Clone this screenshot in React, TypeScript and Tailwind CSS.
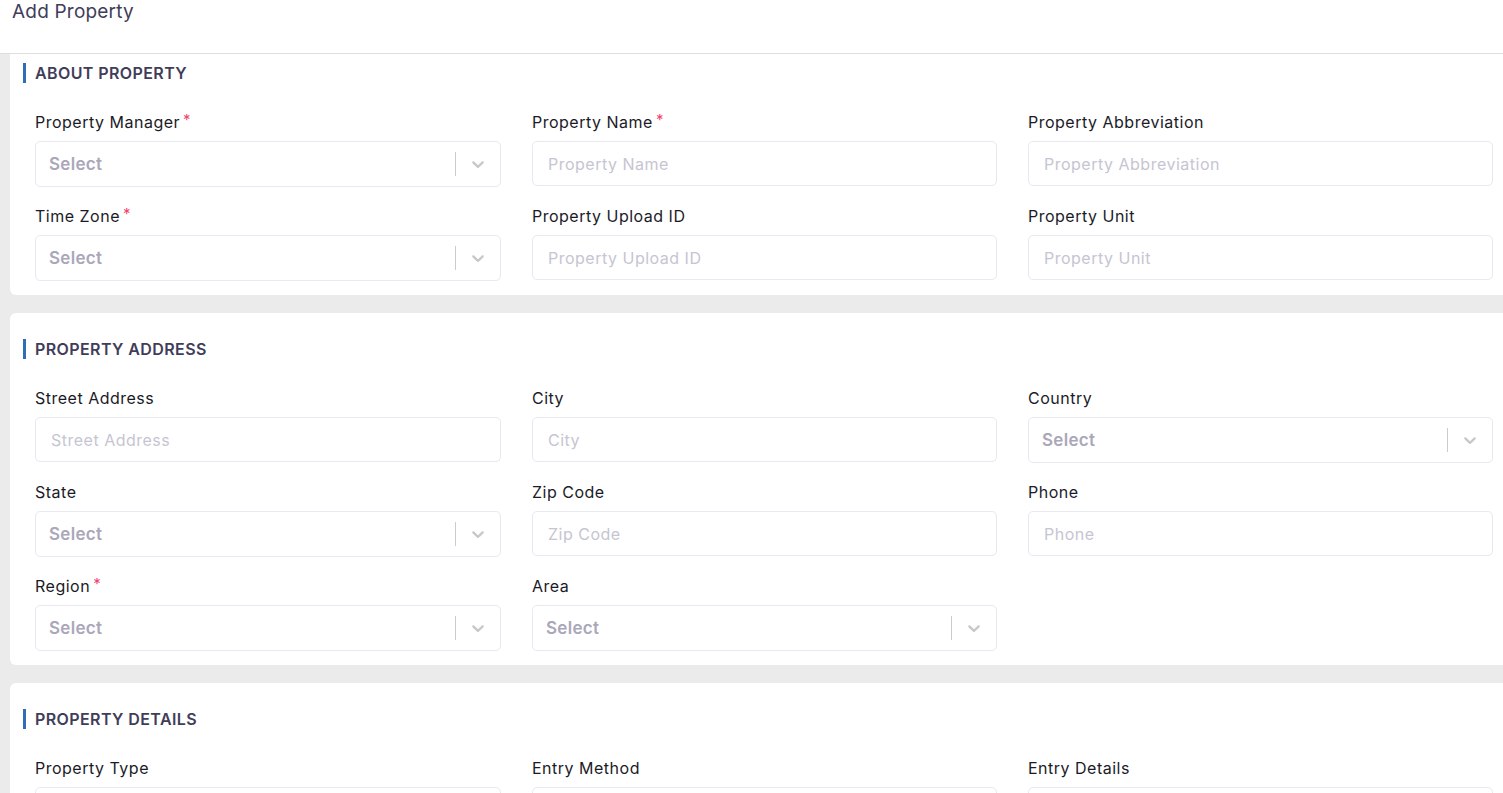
type Field = {
  label: string;
  kind: "select" | "input";
  required?: boolean;
};

type Section = {
  title: string;
  fields: Field[];
};

const sections: Section[] = [
  {
    title: "ABOUT PROPERTY",
    fields: [
      { label: "Property Manager", kind: "select", required: true },
      { label: "Property Name", kind: "input", required: true },
      { label: "Property Abbreviation", kind: "input" },
      { label: "Time Zone", kind: "select", required: true },
      { label: "Property Upload ID", kind: "input" },
      { label: "Property Unit", kind: "input" },
    ],
  },
  {
    title: "PROPERTY ADDRESS",
    fields: [
      { label: "Street Address", kind: "input" },
      { label: "City", kind: "input" },
      { label: "Country", kind: "select" },
      { label: "State", kind: "select" },
      { label: "Zip Code", kind: "input" },
      { label: "Phone", kind: "input" },
      { label: "Region", kind: "select", required: true },
      { label: "Area", kind: "select" },
    ],
  },
  {
    title: "PROPERTY DETAILS",
    fields: [
      { label: "Property Type", kind: "select" },
      { label: "Entry Method", kind: "select" },
      { label: "Entry Details", kind: "input" },
    ],
  },
];

function Chevron() {
  return (
    <svg width="20" height="20" viewBox="0 0 20 20" className="fill-[#c8c8c8]">
      <path d="M4.516 7.548c0.436-0.446 1.043-0.481 1.576 0l3.908 3.747 3.908-3.747c0.533-0.481 1.141-0.446 1.574 0 0.436 0.445 0.408 1.197 0 1.615-0.406 0.418-4.695 4.502-4.695 4.502-0.217 0.223-0.502 0.335-0.787 0.335s-0.57-0.112-0.789-0.335c0 0-4.287-4.084-4.695-4.502s-0.436-1.17 0-1.615z" />
    </svg>
  );
}

function FormField({ field }: { field: Field }) {
  return (
    <div className="flex flex-col">
      <label className="flex h-[22px] items-center text-[16px] leading-[22px] tracking-[0.5px] text-[#1b1b28]">
        {field.label}
        {field.required && (
          <span className="ml-[3px] -mt-[5px] text-[15px] text-[#f1416c]">*</span>
        )}
      </label>
      {field.kind === "select" ? (
        <div className="mt-[8px] flex h-[46px] items-center rounded-[5px] border border-[#e8e8f1] bg-white">
          <span className="flex-1 pl-[13px] pt-[2px] text-[17px] font-semibold tracking-[0.3px] text-[#aaa7ba]">
            Select
          </span>
          <span className="my-[10px] w-px self-stretch bg-[#cccccc]" />
          <span className="flex px-[12px]">
            <Chevron />
          </span>
        </div>
      ) : (
        <input
          placeholder={field.label}
          className="mt-[8px] h-[45px] rounded-[5px] border border-[#e8e8f1] bg-white px-[15px] text-[16px] tracking-[0.5px] outline-none placeholder:text-[#c6c5d2]"
        />
      )}
    </div>
  );
}

function SectionCard({ section }: { section: Section }) {
  return (
    <section className="w-[1540px] rounded-[6px] bg-white pb-[14px] pl-[25px] pt-[26px]">
      <h2 className="-ml-[12px] flex items-center gap-[9px]">
        <span className="h-[20px] w-[3px] bg-[#2f6db5]" />
        <span className="text-[16px] font-semibold leading-[20px] tracking-[0.4px] text-[#3f3d59]">
          {section.title}
        </span>
      </h2>
      <div className="mt-[28px] grid grid-cols-[466px_465px_465px] gap-x-[31px] gap-y-[18px]">
        {section.fields.map((f) => (
          <FormField key={f.label} field={f} />
        ))}
      </div>
    </section>
  );
}

export default function App() {
  return (
    <div className="flex h-[793px] flex-col overflow-hidden bg-[#ebebeb] font-['Inter','Noto_Sans',sans-serif]">
      <header className="h-[54px] shrink-0 border-b border-[#dedede] bg-white px-[12px]">
        <h1 className="text-[19px] leading-[24px] tracking-[0.2px] text-[#3f3d59]">Add Property</h1>
      </header>
      <div className="flex-1 overflow-hidden pl-[10px]">
        <div className="-mt-[17px] flex flex-col gap-[18px]">
          {sections.map((s) => (
            <SectionCard key={s.title} section={s} />
          ))}
        </div>
      </div>
    </div>
  );
}
